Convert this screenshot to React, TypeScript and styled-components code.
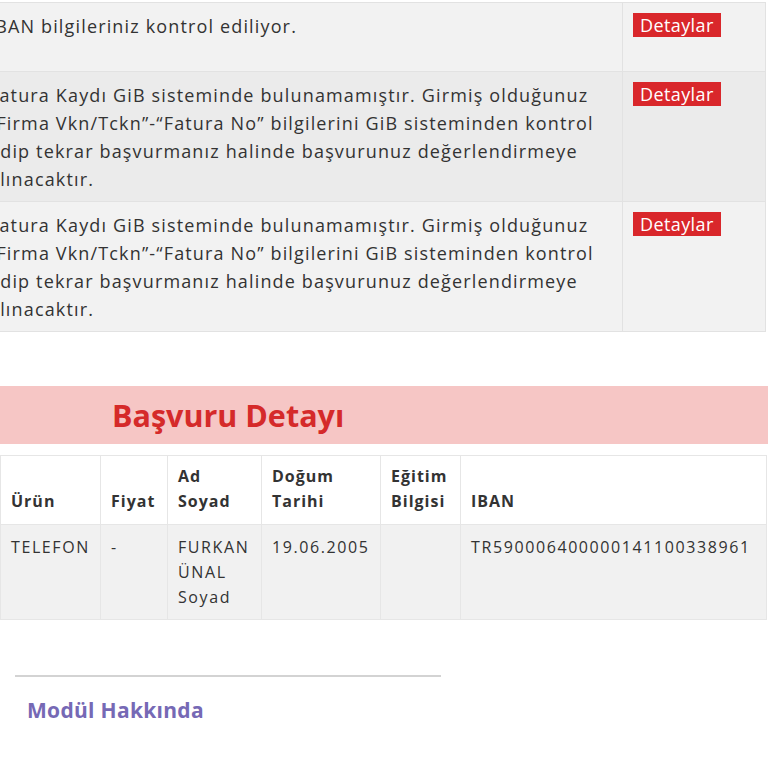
import React from 'react';
import styled, { createGlobalStyle } from 'styled-components';

const GlobalStyle = createGlobalStyle`
  html, body {
    margin: 0;
    padding: 0;
    background: #ffffff;
  }
  body {
    font-family: 'Open Sans', 'Liberation Sans', sans-serif;
    color: #333333;
  }
`;

const Page = styled.div`
  width: 768px;
  height: 768px;
  overflow: hidden;
  padding-top: 2px;
  box-sizing: border-box;
`;

const MessageTable = styled.table`
  width: 785px;
  margin-left: -20px;
  border-collapse: collapse;
  table-layout: fixed;
`;

const MessageRow = styled.tr<{ $shade: string; $height?: number }>`
  background: ${({ $shade }) => $shade};
  height: ${({ $height }) => ($height ? `${$height}px` : 'auto')};
`;

const MessageCell = styled.td`
  vertical-align: top;
  padding: 9px 0 8px 8px;
  border: 1px solid #e2e2e2;
  font-size: 18px;
  line-height: 28px;
  letter-spacing: 1.15px;
  color: #333333;
`;

const ActionCell = styled.td`
  vertical-align: top;
  padding: 10px 0 0 10px;
  border: 1px solid #e2e2e2;
`;

const DetailBadge = styled.span`
  display: inline-block;
  background: #d9272b;
  color: #ffffff;
  font-size: 18px;
  line-height: 24px;
  height: 24px;
  padding: 0 7px;
  letter-spacing: 0.4px;
`;

const SectionBanner = styled.div`
  margin-top: 54px;
  height: 58px;
  background: #f6c6c5;
  display: flex;
  align-items: center;
  padding-left: 112px;
`;

const SectionTitle = styled.h2`
  margin: 0;
  font-size: 30.5px;
  font-weight: 700;
  color: #d52a2a;
  letter-spacing: 0;
  line-height: 1;
`;

const DetailTable = styled.table`
  margin-top: 11px;
  width: 766px;
  border-collapse: collapse;
  table-layout: fixed;
`;

const HeadCell = styled.th<{ $width: number }>`
  width: ${({ $width }) => $width - 20}px;
  text-align: left;
  vertical-align: bottom;
  padding: 8px 10px 10px;
  border: 1px solid #e6e6e6;
  font-size: 16px;
  font-weight: 700;
  line-height: 25px;
  letter-spacing: 1px;
  color: #333333;
  background: #ffffff;
`;

const DataRow = styled.tr`
  background: #f1f1f1;
`;

const DataCell = styled.td`
  vertical-align: top;
  padding: 10px 0 9px 10px;
  border: 1px solid #e6e6e6;
  font-size: 16px;
  line-height: 25px;
  letter-spacing: 1.6px;
  color: #333333;
`;

const Footer = styled.div`
  margin-top: 55px;
  padding-left: 15px;
`;

const Divider = styled.hr`
  width: 426px;
  margin: 0;
  border: 0;
  height: 2px;
  background: #d3d3d3;
`;

const ModuleLink = styled.a`
  display: inline-block;
  margin: 19px 0 0 12px;
  font-size: 21px;
  font-weight: 700;
  color: #7669b5;
  text-decoration: none;
  letter-spacing: 0.3px;
`;

const gibMessage =
  'Fatura Kaydı GiB sisteminde bulunamamıştır. Girmiş olduğunuz “Firma Vkn/Tckn”-“Fatura No” bilgilerini GiB sisteminden kontrol edip tekrar başvurmanız halinde başvurunuz değerlendirmeye alınacaktır.';

const messages = [
  { text: 'IBAN bilgileriniz kontrol ediliyor.', shade: '#f2f2f2', height: 69 },
  { text: gibMessage, shade: '#ebebeb' },
  { text: gibMessage, shade: '#f2f2f2' },
];

const columns = [
  { label: 'Ürün', width: 99 },
  { label: 'Fiyat', width: 66 },
  { label: 'Ad Soyad', width: 93 },
  { label: 'Doğum Tarihi', width: 118 },
  { label: 'Eğitim Bilgisi', width: 79 },
  { label: 'IBAN', width: 305 },
];

const application = ['TELEFON', '-', 'FURKAN ÜNAL Soyad', '19.06.2005', '', 'TR590006400000141100338961'];

const App = () => (
  <Page>
    <GlobalStyle />
    <MessageTable>
      <colgroup>
        <col style={{ width: 642 }} />
        <col style={{ width: 143 }} />
      </colgroup>
      <tbody>
        {messages.map((m, i) => (
          <MessageRow key={i} $shade={m.shade} $height={m.height}>
            <MessageCell>{m.text}</MessageCell>
            <ActionCell>
              <DetailBadge>Detaylar</DetailBadge>
            </ActionCell>
          </MessageRow>
        ))}
      </tbody>
    </MessageTable>

    <SectionBanner>
      <SectionTitle>Başvuru Detayı</SectionTitle>
    </SectionBanner>

    <DetailTable>
      <thead>
        <tr>
          {columns.map((c) => (
            <HeadCell key={c.label} $width={c.width}>
              {c.label}
            </HeadCell>
          ))}
        </tr>
      </thead>
      <tbody>
        <DataRow>
          {application.map((v, i) => (
            <DataCell key={i}>{v}</DataCell>
          ))}
        </DataRow>
      </tbody>
    </DetailTable>

    <Footer>
      <Divider />
      <ModuleLink href="#">Modül Hakkında</ModuleLink>
    </Footer>
  </Page>
);

export default App;
